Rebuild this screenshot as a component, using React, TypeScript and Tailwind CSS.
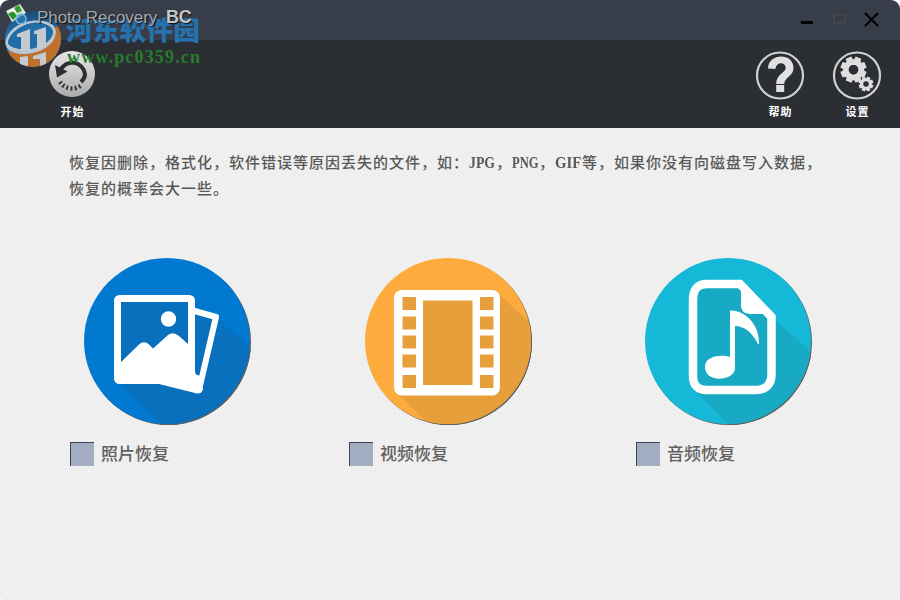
import React from "react";

const SANS = "font-['Liberation_Sans','Noto_Sans_CJK_SC',sans-serif]";

function Watermark() {
  return (
    <svg className="pointer-events-none absolute left-0 top-0" width="220" height="80" viewBox="0 0 220 80">
      <defs>
        <linearGradient id="orb" x1="0" y1="0" x2="0" y2="1">
          <stop offset="0" stopColor="#1a4a78" />
          <stop offset="0.5" stopColor="#2176b8" />
          <stop offset="1" stopColor="#2176b8" />
        </linearGradient>
        <clipPath id="orbClip"><ellipse cx="33" cy="39" rx="28" ry="28" /></clipPath>
      </defs>
      <g clipPath="url(#orbClip)">
        <rect x="4" y="10" width="58" height="58" fill="url(#orb)" />
        <path d="M4 48C20 60 48 52 56 26L63 30V68H4Z" fill="#bd712b" />
        <path d="M5 44C7 28 24 18 44 21C54 23 58 29 55 37C51 48 35 55 20 54C12 53 7 50 5 44ZM8 43C10 48 21 50 30 49C42 47 52 41 53 32C52 25 41 22 33 23C20 25 9 34 8 43Z" fill="#b9c6d2" fillRule="evenodd" />
        <path d="M8 43C10 48 21 50 30 49C42 47 52 41 53 32C52 25 41 22 33 23C20 25 9 34 8 43Z" fill="#206da8" />
        <path d="M17 34L30 29V51H21V37H17ZM34 31L46 27V47L37 50V34H34ZM20 57L28 56V68H20ZM33 56L46 52V64L40 67V59H33Z" fill="#c3cad2" />
      </g>
      <text x="66" y="40" fontSize="26" fontWeight="900" textLength="134" lengthAdjust="spacingAndGlyphs" fill="#2473af" className="font-['Noto_Sans_CJK_SC',sans-serif]">河东软件园</text>
      <text x="67" y="63" fontSize="18" fontWeight="700" textLength="133" lengthAdjust="spacing" fill="#267c2e" className="font-['Liberation_Serif',serif]">www.pc0359.cn</text>
    </svg>
  );
}

function AppLogo() {
  return (
    <svg width="24" height="24" viewBox="0 0 24 24" className="shrink-0">
      <g transform="translate(0 1)">
        <path d="M1 10L15 3L21 12L7 21Z" fill="#d9e9d5" />
        <path d="M3 13L8 10L12 15L8 19Z" fill="#259429" />
        <path d="M9 7L14 4L17 10L12 12Z" fill="#339933" />
        <path d="M3 10L9 7L11 11Z" fill="#fff" />
      </g>
      <circle cx="16" cy="19" r="5" fill="#2f7fbd" fillOpacity=".65" stroke="#7db8e0" strokeWidth="1.5" />
    </svg>
  );
}

function StartIcon() {
  return (
    <svg width="48" height="50" viewBox="0 0 48 50">
      <defs>
        <linearGradient id="start" x1="0" y1="0" x2="0" y2="1">
          <stop offset="0" stopColor="#e6e6e6" /><stop offset="1" stopColor="#ababab" />
        </linearGradient>
      </defs>
      <circle cx="24" cy="24" r="23" fill="url(#start)" />
      <path d="M12.500 20.500A12.800 12.800 0 0 1 37 24Q37 28.500 33 32" fill="none" stroke="#2b2e32" strokeWidth="4" />
      <path d="M7 15L19.500 21.500L9 27.500Z" fill="#2b2e32" />
      <path d="M12 32A14.500 14.500 0 0 0 34 34.500" fill="none" stroke="#2b2e32" strokeWidth="4.500" strokeDasharray="1.800 2.400" />
    </svg>
  );
}

function HelpIcon() {
  return (
    <svg width="50" height="50" viewBox="0 0 50 50">
      <circle cx="25" cy="25.500" r="23" fill="none" stroke="#d2d2d2" strokeWidth="2.200" />
      <path d="M13 18.500C13 3 38.500 2 38.500 18C38.500 26 29.500 27 29.200 34H21.200C21 24 31 23 30.700 17.500C30 11.500 21 12 20.500 19Z" fill="#e1e1e1" />
      <path d="M21.200 35H29.200V42H21.200Z" fill="#e1e1e1" />
    </svg>
  );
}

function Gear({ x, y, s, hole, teeth = 8 }: { x: number; y: number; s: number; hole: number; teeth?: number }) {
  return (
    <g transform={`translate(${x} ${y})`}>
      <circle r={s * 0.59} fill="none" stroke="#dedede" strokeWidth={s * 0.44} />
      {Array.from({ length: teeth }, (_, i) => (
        <path key={i} transform={`rotate(${(i * 360) / teeth + 22.5})`} d={`M${-s * 0.27} ${-s * 0.7}L${-s * 0.23} ${-s}H${s * 0.23}L${s * 0.27} ${-s * 0.7}Z`} fill="#dedede" />
      ))}
      <circle r={hole} fill="#2b2e32" />
    </g>
  );
}

function SettingsIcon() {
  return (
    <svg width="50" height="50" viewBox="0 0 50 50">
      <circle cx="25" cy="25.500" r="23" fill="none" stroke="#d2d2d2" strokeWidth="2.200" />
      <Gear x={21.5} y={19.7} s={13} hole={4.7} />
      <Gear x={34} y={34} s={7.4} hole={2.3} />
    </svg>
  );
}

function ToolButton({ label, children }: { label: string; children: React.ReactNode }) {
  return (
    <button className="flex h-[76px] w-[50px] flex-col items-center">
      {children}
      <span className="mt-[2px] whitespace-nowrap pl-[1px] text-[11px] font-bold leading-[20px] tracking-[1px] text-white">{label}</span>
    </button>
  );
}

function PhotoIcon() {
  return (
    <svg width="170" height="170" viewBox="0 0 170 170" className="drop-shadow-[1px_1px_0.5px_rgba(0,0,0,0.6)]">
      <clipPath id="photoDisc"><circle cx="84" cy="84" r="83" /></clipPath>
      <g clipPath="url(#photoDisc)">
        <rect width="170" height="170" fill="#0279d1" />
        <path d="M35 125L80 170H170V93L132 59Z" fill="#0870bd" />
        <path d="M108 53L133 60L116 133L105 130Z" fill="#0870bd" stroke="#fff" strokeWidth="6" strokeLinejoin="round" />
        <rect x="34.500" y="41.500" width="74" height="82" rx="2" fill="#0870bd" stroke="#fff" strokeWidth="7" />
        <circle cx="85.500" cy="62" r="7.700" fill="#fff" />
        <path d="M37 106L56 87.500Q61 83 66 87.500L70 91.500L85 78Q90 74 96 79L106 88L112 112Q112 119 115 118L120 121V132Q118 138 112 136L76 127L36 126Z" fill="#fff" />
      </g>
    </svg>
  );
}

function VideoIcon() {
  return (
    <svg width="170" height="170" viewBox="0 0 170 170" className="drop-shadow-[1px_1px_0.5px_rgba(0,0,0,0.6)]">
      <clipPath id="videoDisc"><circle cx="85" cy="84" r="83" /></clipPath>
      <g clipPath="url(#videoDisc)">
        <rect width="170" height="170" fill="#feab3d" />
        <path d="M33 135L69 170H170V69L136 37Z" fill="#e79f3b" />
        <rect x="31" y="33" width="106" height="105.500" rx="8" fill="#fff" />
        <path d="M60 43.500H109.500V128H60Z" fill="#e79f3b" />
        {[40, 59.5, 78.5, 97.5, 118].map((y) => (
          <g key={y} fill="#e79f3b">
            <rect x="39.500" y={y} width="13.500" height="13" /><rect x="117" y={y} width="13.500" height="13" />
          </g>
        ))}
      </g>
    </svg>
  );
}

function AudioIcon() {
  return (
    <svg width="170" height="170" viewBox="0 0 170 170" className="drop-shadow-[1px_1px_0.5px_rgba(0,0,0,0.6)]">
      <clipPath id="audioDisc"><circle cx="85" cy="84" r="83" /></clipPath>
      <g clipPath="url(#audioDisc)">
        <rect width="170" height="170" fill="#15b8d7" />
        <path d="M50 132L88 170H170V97L130 61Z" fill="#18a9c4" />
        <path d="M64 27H97L128.500 60V117Q128.500 133 112 133H64Q50 133 50 119V43Q50 27 64 27Z" fill="#18a9c4" stroke="#fff" strokeWidth="8.500" />
        <path d="M98 24L131.500 57H107Q98 56 98 49Z" fill="#fff" />
        <path d="M87 53.500C104 53 117 70 116 87H115C109 75 101 69 92 69V112C90 125 61 126 62 109C63 99 78 97 87 100Z" fill="#fff" />
      </g>
    </svg>
  );
}

function RecoveryOption({ label }: { label: string }) {
  return (
    <label className="flex h-[24px] items-center">
      <span className="h-[24px] w-[24px] border-l border-t border-[#3d4556] bg-[#a3adc1]" />
      <span className="ml-[7px] mt-[2px] whitespace-nowrap text-[17px] font-medium leading-[24px] text-[#606060]">{label}</span>
    </label>
  );
}

function Latin({ children, scale }: { children: string; scale: string }) {
  return (
    <span className="inline-block h-[26px] w-[27px] align-top">
      <span className={`inline-block origin-left font-['Liberation_Serif',serif] text-[16px] font-bold tracking-normal ${scale}`}>{children}</span>
    </span>
  );
}

export default function App() {
  return (
    <div className="h-[600px] w-[900px] overflow-hidden bg-white">
      <main className={`relative isolate flex h-full flex-col overflow-hidden rounded-t-[9px] rounded-b-[4px] bg-[#eeeeee] ${SANS}`}>
        <header className="flex h-[40px] shrink-0 items-start bg-[#383d4a] pl-[5px]">
          <div className="relative z-10 flex items-start">
            <AppLogo />
            <div className="ml-[8px] mt-[6px] flex items-baseline whitespace-nowrap leading-[22px] text-[#a4a8af] [text-shadow:1px_1px_1px_#111]">
              <span className="w-[121px] text-[17px] tracking-[-0.05px]">Photo Recovery</span>
              <strong className="ml-[8px] text-[18px] tracking-[-0.2px] text-[#c4c7ca]">BC</strong>
            </div>
          </div>
          <div className="ml-auto mr-[21px] flex h-[38px] items-center">
            <span className="mr-[20px] mt-[7px] h-[3px] w-[12px] bg-black" />
            <span className="mr-[18px] h-[10px] w-[13px] border-2 border-[#42464d]" />
            <svg width="15" height="15" viewBox="0 0 15 15"><path d="M1 1L14 14M14 1L1 14" stroke="#000" strokeWidth="2" /></svg>
          </div>
        </header>
        <nav className="flex h-[88px] shrink-0 justify-between bg-[#2b2e32] pl-[47px] pr-[18px] pt-[10px]">
          <ToolButton label="开始"><StartIcon /></ToolButton>
          <div className="flex gap-[27px]">
            <ToolButton label="帮助"><HelpIcon /></ToolButton>
            <ToolButton label="设置"><SettingsIcon /></ToolButton>
          </div>
        </nav>
        <section className="grow bg-[repeating-conic-gradient(#f1f1f1_0_25%,#ededed_0_50%)] bg-[length:4px_4px] pt-[22px]">
          <p className="ml-[69px] whitespace-nowrap text-[15px] font-medium leading-[26px] tracking-[1px] text-[#595959]">
            恢复因删除，格式化，软件错误等原因丢失的文件，如：<Latin scale="scale-x-[0.86]">JPG</Latin>，<Latin scale="scale-x-[0.79]">PNG</Latin>，<Latin scale="scale-x-[0.92]">GIF</Latin>等，如果你没有向磁盘写入数据，
            <br />恢复的概率会大一些。
          </p>
          <div className="ml-[83px] mt-[55px] flex gap-[110px]">
            <PhotoIcon /><VideoIcon /><AudioIcon />
          </div>
          <div className="ml-[70px] mt-[15px] grid grid-cols-[279px_287px_120px]">
            <RecoveryOption label="照片恢复" />
            <RecoveryOption label="视频恢复" />
            <RecoveryOption label="音频恢复" />
          </div>
        </section>
        <Watermark />
      </main>
    </div>
  );
}
